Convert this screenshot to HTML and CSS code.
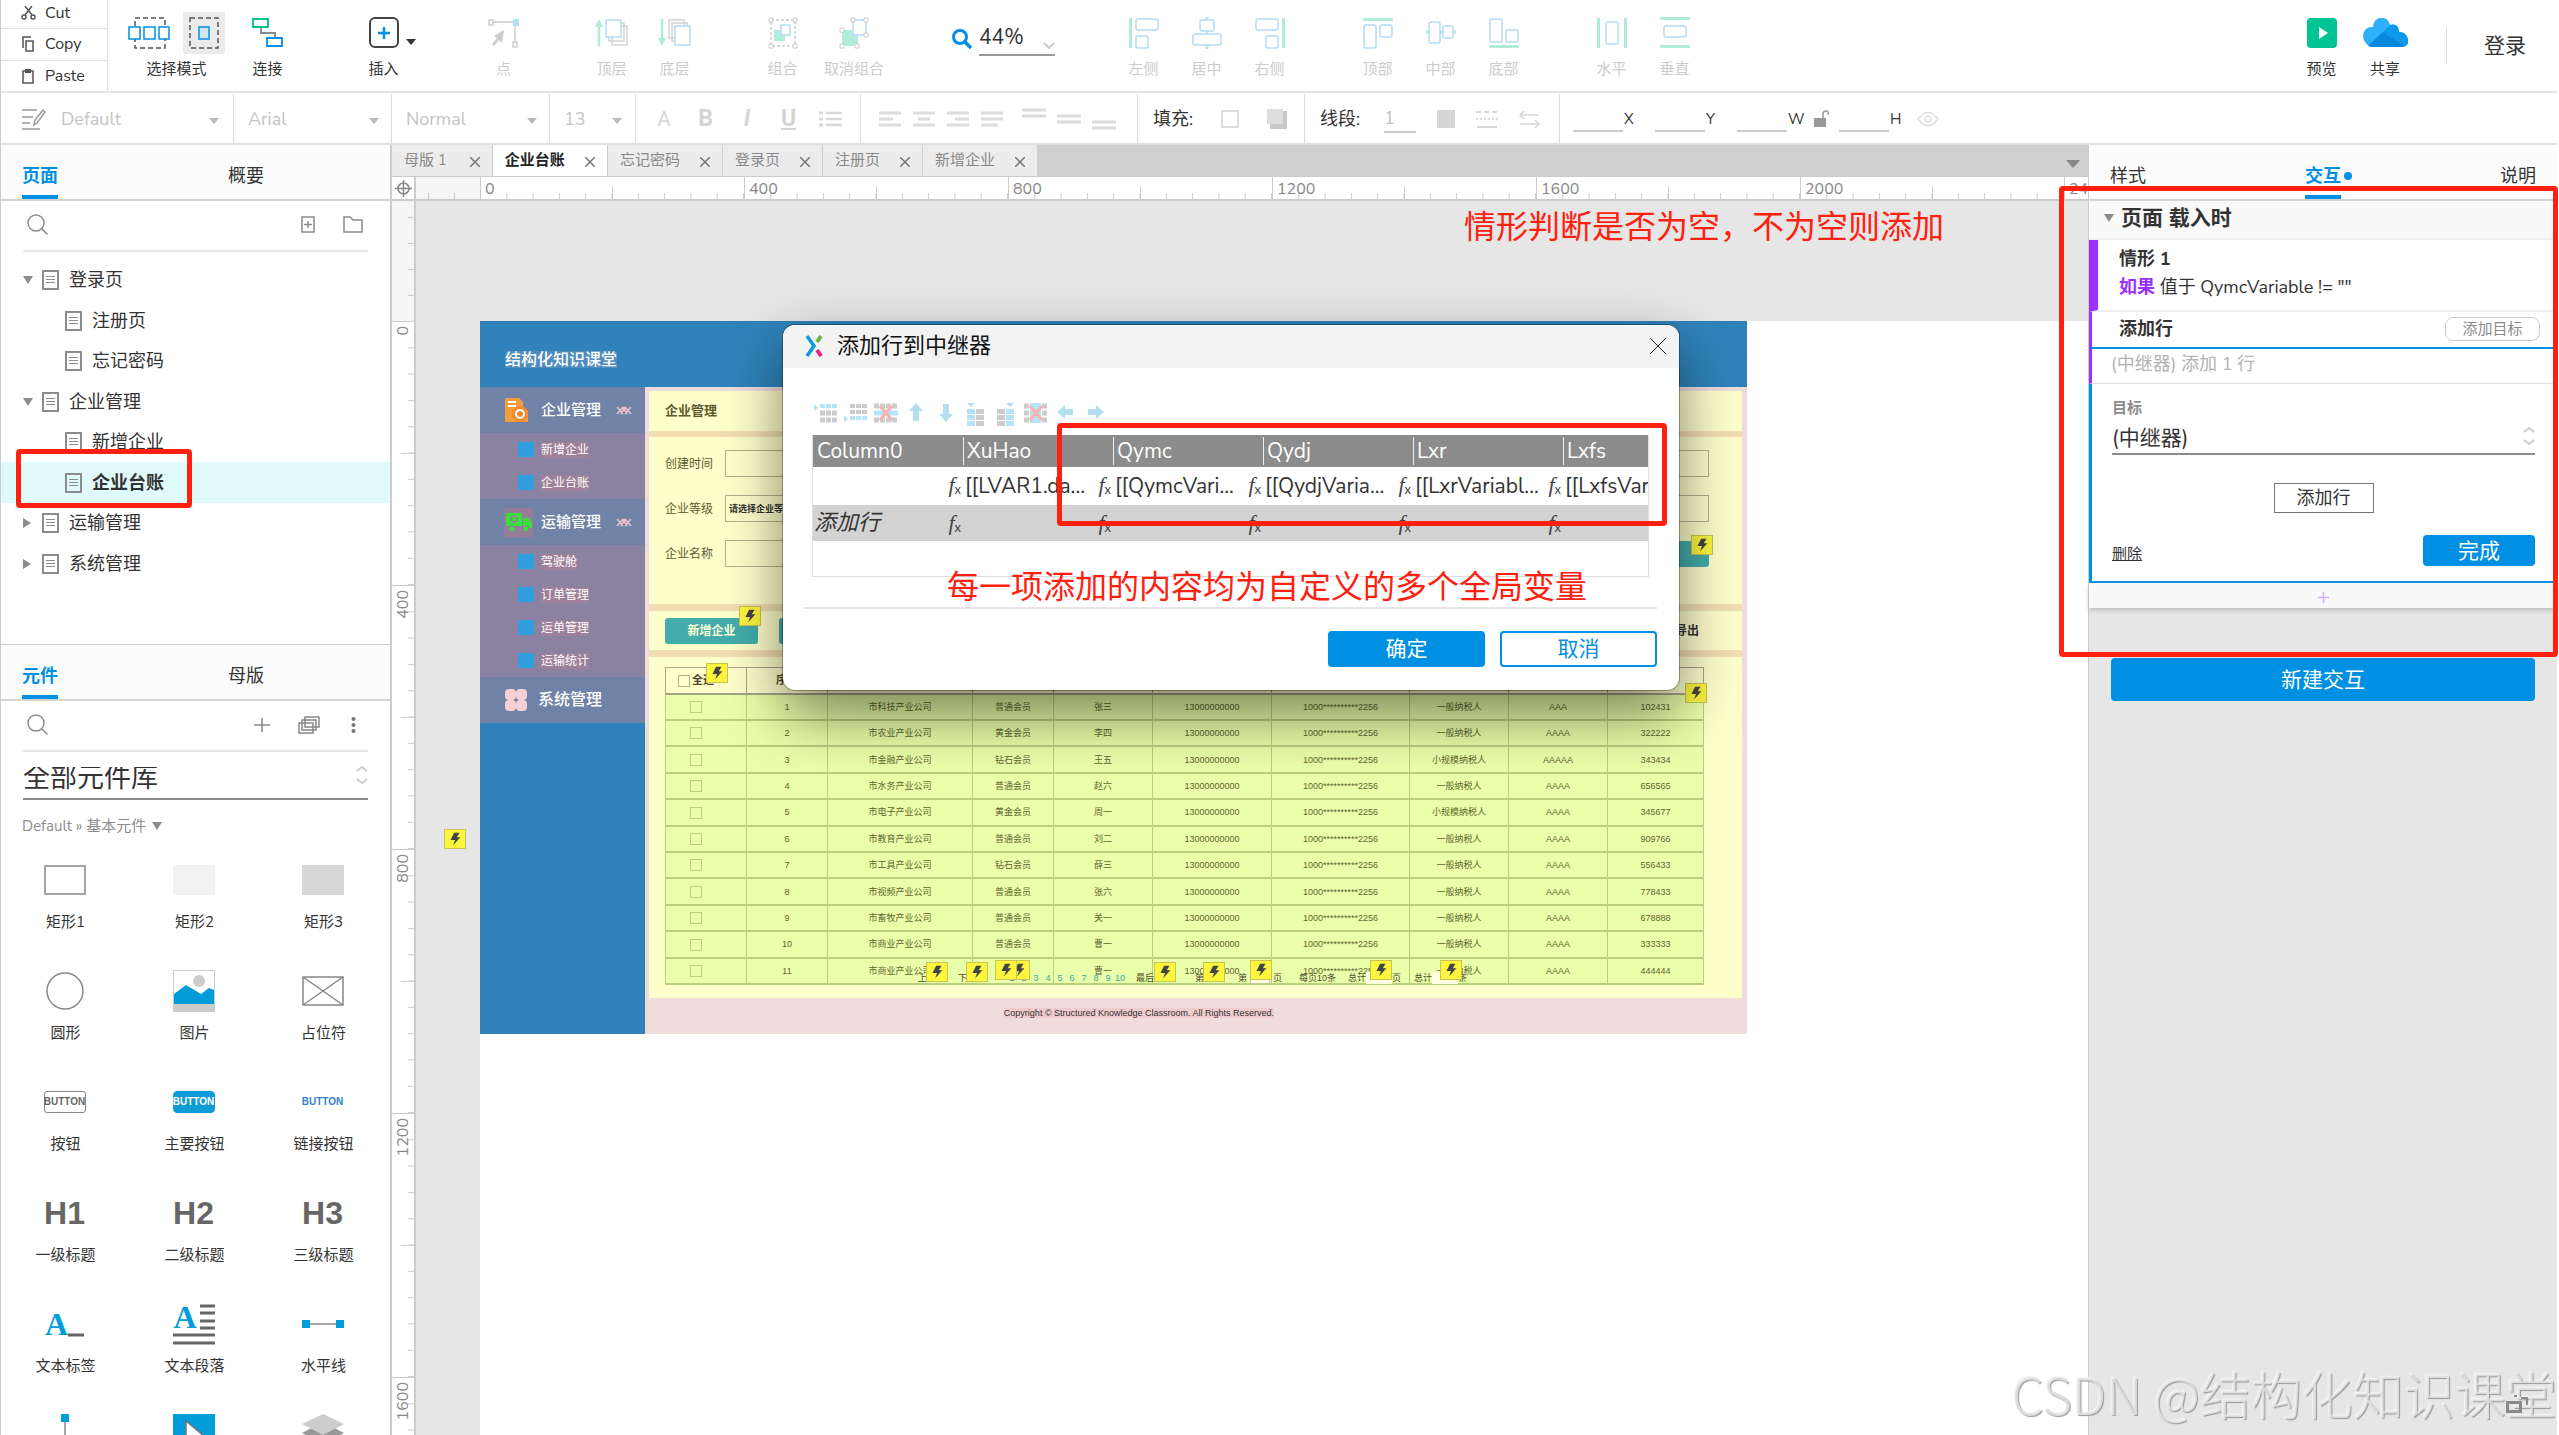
FILE: index.html
```
<!DOCTYPE html>
<html lang="zh-CN">
<head>
<meta charset="utf-8">
<title>企业台账</title>
<link rel="stylesheet" href="styles.css">
</head>
<body>
<svg width="0" height="0" class="defs" aria-hidden="true">
  <symbol id="bolt" viewBox="0 0 22 20"><path d="M10 3h6l-3 5h4l-8 9 2-6H6z" fill="#444"/></symbol>
  <symbol id="doc" viewBox="0 0 17 20"><path d="M1 1h15v18H1z" fill="none" stroke="#8c8c8c" stroke-width="2"/><path d="M4 6.500h9M4 9.500h9M4 12.500h9" stroke="#8c8c8c"/></symbol>
  <symbol id="search" viewBox="0 0 22 22"><circle cx="9" cy="9" r="8" fill="none" stroke="#8c8c8c" stroke-width="1.500"/><path d="M14.500 14.500l6 6" stroke="#8c8c8c" stroke-width="1.500"/></symbol>
  <symbol id="close" viewBox="0 0 10 10"><path d="M0 0l10 10M10 0L0 10" stroke="#777" stroke-width="1.500"/></symbol>
  <symbol id="updown" viewBox="0 0 12 20"><path d="M1 6l5-4 5 4M1 14l5 4 5-4" fill="none" stroke="#ccc" stroke-width="2"/></symbol>
  <symbol id="fold" viewBox="0 0 16 9"><path d="M1 1l6 7M7 1L1 8M9 1l6 7M15 1L9 8M7 1l4 7M9 1L5 8" stroke="#eec4c8" stroke-width="1.500"/></symbol>
</svg>

<header class="toolbar">
  <div class="clipboard">
    <button><svg width="15" height="14" viewBox="0 0 15 14"><g fill="none" stroke="#555" stroke-width="1.500"><circle cx="3" cy="11" r="2"/><circle cx="12" cy="11" r="2"/><path d="M4 9l7-9M11 9L4 0"/></g></svg>Cut</button>
    <button><svg width="15" height="16" viewBox="0 0 15 16"><path d="M5 5h7v10H5zM2 12V1h8" fill="none" stroke="#555" stroke-width="1.500"/></svg>Copy</button>
    <button><svg width="15" height="16" viewBox="0 0 15 16"><path d="M2 3h10v12H2z" fill="none" stroke="#555" stroke-width="1.500"/><path d="M4 1h6v4H4z" fill="#555"/></svg>Paste</button>
  </div>
  <div class="tools">
    <button class="tool mode">
      <span class="pair">
        <svg width="42" height="32" viewBox="0 0 42 32"><path d="M7 1h30v30H7z" fill="none" stroke="#555" stroke-width="1.500" stroke-dasharray="5 3"/><g fill="#fff" stroke="#0090e3" stroke-width="1.500"><path d="M1 10h11v12H1zM16 10h11v12H16zM31 10h10v12H31z"/></g></svg>
        <span class="picked"><svg width="30" height="32" viewBox="0 0 30 32"><path d="M1 1h28v30H1z" fill="none" stroke="#555" stroke-width="1.500" stroke-dasharray="5 3"/><path d="M10 10h10v12H10z" fill="#d3e6f6" stroke="#0090e3" stroke-width="1.500"/></svg></span>
      </span>选择模式</button>
    <button class="tool"><span class="pair"><svg width="32" height="32" viewBox="0 0 32 32"><g fill="none" stroke-width="1.800"><path d="M9 10v6h14v5" stroke="#888"/><path d="M1 2h15v8H1z" stroke="#00c08b"/><path d="M15 21h15v8H15z" stroke="#0090e3"/></g></svg></span>连接</button>
  </div>
  <div class="tools insert">
    <button class="tool"><span class="pair"><svg width="30" height="32" viewBox="0 0 30 32"><rect x="1" y="1" width="28" height="29" rx="5" fill="none" stroke="#444" stroke-width="2"/><path d="M9 16h12M15 10v12" stroke="#0090e3" stroke-width="2.500"/></svg></span>插入</button>
    <i class="caret dark"></i>
  </div>
  <div class="tools point"><button class="tool off"><span class="pair"><svg width="32" height="32" viewBox="0 0 32 32"><g fill="none" stroke="#ccc" stroke-width="1.500"><path d="M1 3h4v5H1zM5 5h20M27 8v17M25 25h4v5h-4z"/></g><path d="M25 2h6v7h-6z" fill="#b3dcf5"/><path d="M16 13l-2 13-3-3-5 6-2-2 5-6-3-2z" fill="#ccc"/></svg></span>点</button></div>
  <div class="tools">
    <button class="tool off"><span class="pair"><svg width="34" height="30" viewBox="0 0 34 30"><path d="M4 28V6" stroke="#b1ecda" stroke-width="2.500"/><path d="M0 9l4-8 4 8z" fill="#b1ecda"/><g fill="#fff" stroke="#d4d4d4" stroke-width="1.500"><path d="M17 8h15v19H17zM14 5h15v18H14z"/><path d="M11 2h15v17H11z" stroke="#b3dcf5"/></g></svg></span>顶层</button>
    <button class="tool off"><span class="pair"><svg width="34" height="30" viewBox="0 0 34 30"><path d="M4 1v22" stroke="#b1ecda" stroke-width="2.500"/><path d="M0 20l4 8 4-8z" fill="#b1ecda"/><g fill="#fff" stroke="#d4d4d4" stroke-width="1.500"><path d="M11 2h15v18H11zM14 5h15v18H14z"/><path d="M17 8h15v19H17z" stroke="#b3dcf5"/></g></svg></span>底层</button>
  </div>
  <div class="tools">
    <button class="tool off"><span class="pair"><svg width="30" height="32" viewBox="0 0 30 32"><path d="M3 3h24v26H3z" fill="none" stroke="#ccc" stroke-width="1.500" stroke-dasharray="3 2"/><g fill="#fff" stroke="#ccc"><path d="M1 1h4v4H1zM25 1h4v4h-4zM1 27h4v4H1zM25 27h4v4h-4z"/></g><path d="M6 13h11v11H6z" fill="#b1ecda"/><path d="M13 8h9v10h-9z" fill="#fff" stroke="#b3dcf5" stroke-width="1.500"/></svg></span>组合</button>
    <button class="tool off wide"><span class="pair"><svg width="30" height="32" viewBox="0 0 30 32"><path d="M3 13h16v16H3z" fill="#b1ecda"/><path d="M14 3h13v15H14z" fill="#fff" stroke="#b3dcf5" stroke-width="1.500"/><g fill="#fff" stroke="#ccc"><path d="M1 11h4v4H1zM1 27h4v4H1zM16 27h4v4h-4zM12 1h4v4h-4zM25 1h4v4h-4zM25 16h4v4h-4z"/></g></svg></span>取消组合</button>
  </div>
  <label class="zoom">
    <svg width="20" height="20" viewBox="0 0 20 20"><circle cx="8" cy="8" r="6.500" fill="none" stroke="#0090e3" stroke-width="3"/><path d="M13 13l6 6" stroke="#0090e3" stroke-width="3.500"/></svg>
    <input value="44%" aria-label="缩放">
    <svg class="zoom-arrow" width="12" height="7" viewBox="0 0 12 7"><path d="M1 1l5 5 5-5" fill="none" stroke="#ccc" stroke-width="2"/></svg>
  </label>
  <div class="tools">
    <button class="tool off"><span class="pair"><svg width="30" height="32" viewBox="0 0 30 32" fill="none" stroke-width="1.500" stroke="#b3dcf5"><path d="M1.500 1v30" stroke="#b1ecda" stroke-width="3"/><rect x="7" y="2" width="22" height="11" rx="2"/><rect x="7" y="19" width="12" height="12" rx="2"/></svg></span>左侧</button>
    <button class="tool off"><span class="pair"><svg width="30" height="32" viewBox="0 0 30 32" fill="#fff" stroke-width="1.500" stroke="#b3dcf5"><path d="M15 0v32" stroke="#b1ecda" stroke-width="3"/><rect x="8" y="3" width="14" height="11" rx="2"/><rect x="1" y="17" width="28" height="11" rx="2"/></svg></span>居中</button>
    <button class="tool off"><span class="pair"><svg width="30" height="32" viewBox="0 0 30 32" fill="none" stroke-width="1.500" stroke="#b3dcf5"><path d="M28.500 1v30" stroke="#b1ecda" stroke-width="3"/><rect x="1" y="2" width="22" height="11" rx="2"/><rect x="11" y="19" width="12" height="12" rx="2"/></svg></span>右侧</button>
  </div>
  <div class="tools">
    <button class="tool off"><span class="pair"><svg width="30" height="32" viewBox="0 0 30 32" fill="none" stroke-width="1.500" stroke="#b3dcf5"><path d="M0 2.500h30" stroke="#b1ecda" stroke-width="3"/><rect x="1" y="8" width="12" height="23" rx="2"/><rect x="17" y="8" width="12" height="12" rx="2"/></svg></span>顶部</button>
    <button class="tool off"><span class="pair"><svg width="30" height="32" viewBox="0 0 30 32" fill="#fff" stroke-width="1.500" stroke="#b3dcf5"><path d="M0 15h30" stroke="#b1ecda" stroke-width="3"/><rect x="3" y="5" width="11" height="21" rx="2"/><rect x="17" y="9" width="10" height="12" rx="2"/></svg></span>中部</button>
    <button class="tool off"><span class="pair"><svg width="30" height="32" viewBox="0 0 30 32" fill="none" stroke-width="1.500" stroke="#b3dcf5"><path d="M0 29.500h30" stroke="#b1ecda" stroke-width="3"/><rect x="1" y="2" width="12" height="23" rx="2"/><rect x="17" y="13" width="12" height="12" rx="2"/></svg></span>底部</button>
  </div>
  <div class="tools">
    <button class="tool off"><span class="pair"><svg width="30" height="32" viewBox="0 0 30 32" fill="none" stroke-width="1.500" stroke="#b3dcf5"><path d="M1.500 1v30M28.500 1v30" stroke="#b1ecda" stroke-width="3"/><rect x="9" y="5" width="12" height="22" rx="2"/></svg></span>水平</button>
    <button class="tool off"><span class="pair"><svg width="30" height="32" viewBox="0 0 30 32" fill="none" stroke-width="1.500" stroke="#b3dcf5"><path d="M0 1.500h30M0 29.500h30" stroke="#b1ecda" stroke-width="3"/><rect x="4" y="9" width="22" height="11" rx="2"/></svg></span>垂直</button>
  </div>
  <div class="account">
    <button class="tool"><span class="pair"><svg width="30" height="30" viewBox="0 0 30 30"><rect width="30" height="30" rx="4" fill="#00c494"/><path d="M12 9l9 6-9 6z" fill="#fff"/></svg></span>预览</button>
    <button class="tool"><span class="pair"><svg width="46" height="30" viewBox="0 0 46 30"><path d="M10 29C-2 26-2 8 11 9 12-3 26-3 28 7c6-2 9 2 9 7 11 0 11 14 4 15z" fill="#2fb0fb"/><path d="M21 14l7-7c6-2 9 2 9 7 11 0 11 14 6 14z" fill="#0d9aec"/><path d="M6 28l15-14 22 14-3 1H10z" fill="#0489dc"/></svg></span>共享</button>
    <a class="login" href="#login">登录</a>
  </div>
</header>

<section class="format">
  <div class="cell style-cell">
    <svg width="24" height="22" viewBox="0 0 24 22"><path d="M0 2h15M0 9h11M0 15h8M0 21h18" stroke="#999" stroke-width="1.500"/><path d="M12 17l1-5 8-10 2 2-8 11z" fill="#fff" stroke="#999" stroke-width="1.500"/></svg>
    <select aria-label="样式"><option>Default</option></select><i class="caret"></i>
  </div>
  <div class="cell font-cell"><select aria-label="字体"><option>Arial</option></select><i class="caret"></i></div>
  <div class="cell font-cell"><select aria-label="字重"><option>Normal</option></select><i class="caret"></i></div>
  <div class="cell size-cell"><select aria-label="字号"><option>13</option></select><i class="caret"></i></div>
  <div class="cell letters">
    <button class="thin">A</button><button><b>B</b></button><button><b><i>I</i></b></button><button><u><b>U</b></u></button>
    <button><svg width="24" height="20" viewBox="0 0 24 20"><path d="M8 4h16M8 10h16M8 16h16" stroke="#d8d8d8" stroke-width="2.500"/><path d="M1 4h4M1 10h4M1 16h4" stroke="#d8d8d8" stroke-width="3"/></svg></button>
  </div>
  <div class="cell aligns">
    <svg width="22" height="18" viewBox="0 0 22 18"><path d="M0 3h22M0 9h14M0 15h22"/></svg>
    <svg width="22" height="18" viewBox="0 0 22 18"><path d="M0 3h22M5 9h12M0 15h22"/></svg>
    <svg width="22" height="18" viewBox="0 0 22 18"><path d="M0 3h22M8 9h14M0 15h22"/></svg>
    <svg width="22" height="18" viewBox="0 0 22 18"><path d="M0 3h22M0 9h22M0 15h17"/></svg>
    <div class="vertical">
      <svg width="24" height="24" viewBox="0 0 24 24"><path d="M0 3h24M0 9h24"/></svg>
      <svg width="24" height="24" viewBox="0 0 24 24"><path d="M0 9h24M0 15h24"/></svg>
      <svg width="24" height="24" viewBox="0 0 24 24"><path d="M0 15h24M0 21h24"/></svg>
    </div>
  </div>
  <div class="cell fill-cell">填充:
    <svg width="18" height="18" viewBox="0 0 18 18"><path d="M1 1h16v16H1z" fill="#fff" stroke="#ddd" stroke-width="2"/></svg>
    <svg width="20" height="20" viewBox="0 0 20 20"><path d="M3 2h17v18H3z" fill="#c8c8c8"/><path d="M0 0h16v15H0z" fill="#dedede"/></svg>
  </div>
  <div class="cell line-cell">线段:
    <input value="1" aria-label="线宽">
    <svg width="18" height="18" viewBox="0 0 18 18"><path d="M0 0h18v18H0z" fill="#d6d6d6"/></svg>
    <svg width="22" height="18" viewBox="0 0 22 18"><path d="M0 2h22" stroke="#d8d8d8" stroke-width="2" stroke-dasharray="5 3"/><path d="M0 9h22" stroke="#d8d8d8" stroke-width="2" stroke-dasharray="2 2"/><path d="M1 17h20" stroke="#d8d8d8" stroke-width="2"/></svg>
    <svg width="21" height="18" viewBox="0 0 21 18"><path d="M20 5H1l4-4M1 5l4 4M1 14h19l-4-4M20 14l-4 4" fill="none" stroke="#d8d8d8" stroke-width="1.500"/></svg>
  </div>
  <div class="geometry">
    <label><input>X</label><label><input>Y</label>
    <label class="w"><input>W<svg width="15" height="18" viewBox="0 0 15 18"><path d="M0 8h12v9H0z" fill="#999"/><path d="M9 8V4q0-3 3-3t2 4" fill="none" stroke="#999" stroke-width="1.500"/></svg></label>
    <label class="h"><input>H</label>
    <svg width="22" height="14" viewBox="0 0 22 14"><path d="M1 7q10-13 20 0Q11 20 1 7z" fill="none" stroke="#ddd" stroke-width="1.500"/><circle cx="11" cy="7" r="3" fill="none" stroke="#ddd" stroke-width="1.500"/></svg>
  </div>
</section>

<main>
  <aside class="left">
    <section class="pages">
      <nav class="tabs"><button class="on">页面</button><button>概要</button></nav>
      <div class="searchbar">
        <svg width="22" height="22"><use href="#search"/></svg>
        <span class="spacer"></span>
        <svg width="14" height="17" viewBox="0 0 14 17"><path d="M1 1h12v15H1zM7 5v7M3 8.500h8" fill="none" stroke="#8c8c8c" stroke-width="1.500"/></svg>
        <svg width="20" height="17" viewBox="0 0 20 17"><path d="M1 1h6l3 3h9v12H1z" fill="none" stroke="#8c8c8c" stroke-width="1.500"/></svg>
      </div>
      <ul class="tree">
        <li><i class="caret gray"></i><svg width="17" height="20"><use href="#doc"/></svg>登录页</li>
        <li class="child"><svg width="17" height="20"><use href="#doc"/></svg>注册页</li>
        <li class="child"><svg width="17" height="20"><use href="#doc"/></svg>忘记密码</li>
        <li><i class="caret gray"></i><svg width="17" height="20"><use href="#doc"/></svg>企业管理</li>
        <li class="child"><svg width="17" height="20"><use href="#doc"/></svg>新增企业</li>
        <li class="child current"><svg width="17" height="20"><use href="#doc"/></svg>企业台账<span class="mark"></span></li>
        <li><i class="caret gray closed"></i><svg width="17" height="20"><use href="#doc"/></svg>运输管理</li>
        <li><i class="caret gray closed"></i><svg width="17" height="20"><use href="#doc"/></svg>系统管理</li>
      </ul>
    </section>
    <section class="widgets">
      <nav class="tabs"><button class="on">元件</button><button>母版</button></nav>
      <div class="searchbar">
        <svg width="22" height="22"><use href="#search"/></svg>
        <span class="spacer"></span>
        <svg width="16" height="16" viewBox="0 0 16 16"><path d="M0 8h16M8 1v14" stroke="#888" stroke-width="1.500"/></svg>
        <svg width="22" height="18" viewBox="0 0 22 18"><g fill="#fff" stroke="#888" stroke-width="1.500"><path d="M7 1h14v10H7zM4 4h14v10H4zM1 7h14v10H1z"/></g></svg>
        <svg class="dots" width="5" height="18" viewBox="0 0 5 18"><g fill="#777"><circle cx="2.500" cy="3" r="2"/><circle cx="2.500" cy="9" r="2"/><circle cx="2.500" cy="15" r="2"/></g></svg>
      </div>
      <div class="picker"><select aria-label="元件库"><option>全部元件库</option></select><svg width="12" height="20"><use href="#updown"/></svg></div>
      <div class="crumb">Default » 基本元件 <i class="caret gray"></i></div>
      <ul class="grid">
        <li><span><svg width="42" height="30"><path d="M1 1h40v28H1z" fill="#fff" stroke="#888" stroke-width="1.500"/></svg></span>矩形1</li>
        <li><span><svg width="42" height="30"><path d="M0 0h42v30H0z" fill="#f2f2f2"/></svg></span>矩形2</li>
        <li><span><svg width="42" height="30"><path d="M0 0h42v30H0z" fill="#d7d7d7"/></svg></span>矩形3</li>
        <li><span><svg width="40" height="40"><circle cx="20" cy="20" r="18" fill="none" stroke="#888" stroke-width="1.500"/></svg></span>圆形</li>
        <li><span><svg width="42" height="42"><path d="M0 0h42v42H0z" fill="#ccc"/><path d="M1 1h40v33H1z" fill="#fff"/><circle cx="26" cy="11" r="6" fill="#ccc"/><path d="M1 24l12-9 15 9 8-6 5 2v14H1z" fill="#009dd9"/></svg></span>图片</li>
        <li><span><svg width="42" height="30"><path d="M1 1h40v28H1zM1 1l40 28M41 1L1 29" fill="none" stroke="#888" stroke-width="1.500"/></svg></span>占位符</li>
        <li><span><b class="chip">BUTTON</b></span>按钮</li>
        <li><span><b class="chip primary">BUTTON</b></span>主要按钮</li>
        <li><span><b class="chip link">BUTTON</b></span>链接按钮</li>
        <li><span><b class="heading">H1</b></span>一级标题</li>
        <li><span><b class="heading">H2</b></span>二级标题</li>
        <li><span><b class="heading">H3</b></span>三级标题</li>
        <li><span><b class="glyph">A</b><svg width="16" height="30"><path d="M0 26h16" stroke="#666" stroke-width="3"/></svg></span>文本标签</li>
        <li><span class="para"><b class="glyph">A</b><svg width="42" height="42"><path d="M27 3h15M27 10h15M27 18h15M27 25h15M0 32h42M0 40h42" stroke="#666" stroke-width="3"/></svg></span>文本段落</li>
        <li><span><svg width="42" height="10"><path d="M0 5h42" stroke="#888" stroke-width="1.500"/><path d="M0 1h8v8H0zM34 1h8v8h-8z" fill="#009dd9"/></svg></span>水平线</li>
        <li class="cut"><span><svg width="10" height="42"><path d="M5 0v42" stroke="#888" stroke-width="1.500"/><path d="M1 0h8v8H1z" fill="#009dd9"/></svg></span></li>
        <li class="cut"><span><svg width="42" height="42"><path d="M0 0h42v42H0z" fill="#009dd9"/><path d="M13 7l18 15H13z" fill="#fff" stroke="#777" stroke-width="1.500"/></svg></span></li>
        <li class="cut"><span><svg width="42" height="42"><path d="M21 8l21 11-21 11L0 19z" fill="#999"/><path d="M21 0l21 10-21 11L0 10z" fill="#ccc"/></svg></span></li>
      </ul>
    </section>
  </aside>

  <section class="workspace">
    <nav class="files">
      <button>母版 1<svg width="10" height="10"><use href="#close"/></svg></button>
      <button class="on">企业台账<svg width="10" height="10"><use href="#close"/></svg></button>
      <button>忘记密码<svg width="10" height="10"><use href="#close"/></svg></button>
      <button>登录页<svg width="10" height="10"><use href="#close"/></svg></button>
      <button>注册页<svg width="10" height="10"><use href="#close"/></svg></button>
      <button>新增企业<svg width="10" height="10"><use href="#close"/></svg></button>
      <span class="spacer"></span><i class="caret more"></i>
    </nav>
    <div class="ruler-x">
      <span class="origin"><svg width="17" height="17" viewBox="0 0 17 17"><circle cx="8.500" cy="8.500" r="5.500" fill="none" stroke="#888" stroke-width="1.500"/><path d="M8.500 0v17M0 8.500h17" stroke="#888" stroke-width="1.500"/></svg></span>
      <span class="before"></span>
      <span class="unit">0</span><span class="unit">400</span><span class="unit">800</span><span class="unit">1200</span><span class="unit">1600</span><span class="unit">2000</span><span class="unit">2400</span>
    </div>
    <div class="stage-row">
      <div class="ruler-y">
        <span class="before"></span>
        <span class="unit"><b>0</b></span><span class="unit"><b>400</b></span><span class="unit"><b>800</b></span><span class="unit"><b>1200</b></span><span class="unit"><b>1600</b></span>
      </div>
      <div class="stage">
        <svg class="badge b-page"><use href="#bolt"/></svg>
        <div class="sheet">
          <article class="board">
            <header class="board-head"><span>结构化知识课堂</span></header>
            <nav class="menu">
              <h3><svg width="25" height="24" viewBox="0 0 25 24"><path d="M1 2q0-2 2-2h12l4 4v8h5v12H1z" fill="#f79b3f"/><path d="M4 4h8M4 8h8" stroke="#fff" stroke-width="2"/><circle cx="16" cy="16" r="8" fill="#f58a2c"/><circle cx="16" cy="16" r="4" fill="none" stroke="#fff" stroke-width="2"/></svg>企业管理<svg class="fold" width="16" height="9"><use href="#fold"/></svg></h3>
              <ul><li><span>新增企业</span></li><li><span>企业台账</span></li></ul>
              <h3><svg width="29" height="29" viewBox="0 0 29 29" class="truck"><path d="M2 5h16v13H2zM19 10h6l3 5v5H19z" fill="#38e03c"/><circle cx="10" cy="11" r="3" fill="none" stroke="#977c9a" stroke-width="1.500"/><g fill="#38e03c" stroke="#977c9a"><circle cx="8" cy="21" r="3"/><circle cx="22" cy="21" r="3"/></g></svg>运输管理<svg class="fold" width="16" height="9"><use href="#fold"/></svg></h3>
              <ul><li><span>驾驶舱</span></li><li><span>订单管理</span></li><li><span>运单管理</span></li><li><span>运输统计</span></li></ul>
              <h3 class="large"><svg width="24" height="24" viewBox="0 0 24 24"><g fill="#f7d0d3"><rect x="1" y="1" width="11" height="11" rx="4"/><rect x="12" y="1" width="11" height="11" rx="4"/><rect x="1" y="12" width="11" height="11" rx="4"/><rect x="12" y="12" width="11" height="11" rx="4"/></g></svg>系统管理</h3>
            </nav>
            <div class="content">
              <h2>企业管理</h2>
              <form class="filters">
                <div class="field"><label for="f1">创建时间</label><input id="f1"><input aria-label="条件二"></div>
                <div class="field"><label for="f2">企业等级</label><select id="f2"><option>请选择企业等级</option></select><input aria-label="条件三"></div>
                <div class="field"><label for="f3">企业名称</label><input id="f3"><button type="button" class="teal" aria-label="查询"></button></div>
              </form>
              <div class="actions"><button class="teal">新增企业</button><button class="teal" aria-label="操作"></button><a href="#export">导出</a></div>
              <div class="records">
                <table>
                  <colgroup><col class="c1"><col class="c1"><col class="c3"><col class="c1"><col class="c2"><col class="c5"><col class="c6"><col class="c2"><col class="c2"><col></colgroup>
                  <thead><tr><th><label><input type="checkbox">全选</label></th><th>序号</th><th></th><th></th><th></th><th></th><th></th><th></th><th></th><th></th></tr></thead>
                  <tbody>
                  <tr><td><input type="checkbox" aria-label="选择"></td><td>1</td><td>市科技产业公司</td><td>普通会员</td><td>张三</td><td>13000000000</td><td>1000**********2256</td><td>一般纳税人</td><td>AAA</td><td>102431</td></tr>
                  <tr><td><input type="checkbox" aria-label="选择"></td><td>2</td><td>市农业产业公司</td><td>黄金会员</td><td>李四</td><td>13000000000</td><td>1000**********2256</td><td>一般纳税人</td><td>AAAA</td><td>322222</td></tr>
                  <tr><td><input type="checkbox" aria-label="选择"></td><td>3</td><td>市金融产业公司</td><td>钻石会员</td><td>王五</td><td>13000000000</td><td>1000**********2256</td><td>小规模纳税人</td><td>AAAAA</td><td>343434</td></tr>
                  <tr><td><input type="checkbox" aria-label="选择"></td><td>4</td><td>市水务产业公司</td><td>普通会员</td><td>赵六</td><td>13000000000</td><td>1000**********2256</td><td>一般纳税人</td><td>AAAA</td><td>656565</td></tr>
                  <tr><td><input type="checkbox" aria-label="选择"></td><td>5</td><td>市电子产业公司</td><td>黄金会员</td><td>周一</td><td>13000000000</td><td>1000**********2256</td><td>小规模纳税人</td><td>AAAA</td><td>345677</td></tr>
                  <tr><td><input type="checkbox" aria-label="选择"></td><td>6</td><td>市教育产业公司</td><td>普通会员</td><td>刘二</td><td>13000000000</td><td>1000**********2256</td><td>一般纳税人</td><td>AAAA</td><td>909766</td></tr>
                  <tr><td><input type="checkbox" aria-label="选择"></td><td>7</td><td>市工具产业公司</td><td>钻石会员</td><td>薛三</td><td>13000000000</td><td>1000**********2256</td><td>一般纳税人</td><td>AAAA</td><td>556433</td></tr>
                  <tr><td><input type="checkbox" aria-label="选择"></td><td>8</td><td>市视频产业公司</td><td>普通会员</td><td>张六</td><td>13000000000</td><td>1000**********2256</td><td>一般纳税人</td><td>AAAA</td><td>778433</td></tr>
                  <tr><td><input type="checkbox" aria-label="选择"></td><td>9</td><td>市畜牧产业公司</td><td>普通会员</td><td>关一</td><td>13000000000</td><td>1000**********2256</td><td>一般纳税人</td><td>AAAA</td><td>678888</td></tr>
                  <tr><td><input type="checkbox" aria-label="选择"></td><td>10</td><td>市商业产业公司</td><td>普通会员</td><td>曹一</td><td>13000000000</td><td>1000**********2256</td><td>一般纳税人</td><td>AAAA</td><td>333333</td></tr>
                  <tr><td><input type="checkbox" aria-label="选择"></td><td>11</td><td>市商业产业公司</td><td>普通会员</td><td>曹一</td><td>13000000000</td><td>1000**********2256</td><td>一般纳税人</td><td>AAAA</td><td>444444</td></tr>
                  </tbody>
                </table>
                <div class="pager">
                  <span class="p-word">上一页</span><span class="p-next">下一页</span>
                  <span class="nums"><a href="#1">1</a><a href="#2">2</a><a href="#3">3</a><a href="#4">4</a><a href="#5">5</a><a href="#6">6</a><a href="#7">7</a><a href="#8">8</a><a href="#9">9</a><a href="#10">10</a></span>
                  <span class="p-last">最后一页</span><span class="p-first">第一页</span><span class="p-go">第<input aria-label="页码">页</span><span class="p-size">每页10条</span><span class="p-total">总计<i></i>页</span><span>总计<i></i>条</span>
                </div>
              </div>
            </div>
            <footer><span>Copyright © Structured Knowledge Classroom. All Rights Reserved.</span></footer>
            <svg class="badge b1"><use href="#bolt"/></svg><svg class="badge b2"><use href="#bolt"/></svg>
            <svg class="badge b3"><use href="#bolt"/></svg><svg class="badge b4"><use href="#bolt"/></svg>
            <svg class="badge b6"><use href="#bolt"/></svg><svg class="badge b5"><use href="#bolt"/></svg>
            <svg class="badge b7"><use href="#bolt"/></svg><svg class="badge b8"><use href="#bolt"/></svg>
            <svg class="badge b9"><use href="#bolt"/></svg><svg class="badge b10"><use href="#bolt"/></svg>
            <svg class="badge b11"><use href="#bolt"/></svg><svg class="badge b12"><use href="#bolt"/></svg>
            <svg class="badge b13"><use href="#bolt"/></svg>
          </article>
        </div>
        <p class="note note-top">情形判断是否为空，不为空则添加</p>
        <div class="dialog" role="dialog" aria-labelledby="dlg">
          <header><svg width="18" height="22" viewBox="0 0 18 22"><path d="M2 1l7 10-7 10" fill="none" stroke="#0a9bdc" stroke-width="3.500"/><path d="M16 1l-4 6" stroke="#6cb644" stroke-width="4"/><path d="M16 21l-4-6" stroke="#e6257f" stroke-width="4"/></svg><h2 id="dlg">添加行到中继器</h2>
            <button aria-label="关闭"><svg width="18" height="18" viewBox="0 0 18 18"><path d="M1 1l16 16M17 1L1 17" stroke="#222"/></svg></button></header>
          <div class="row-tools">
            <svg width="24" height="20" viewBox="0 0 24 20"><path d="M0 1l4 4-4 3z" fill="#b5def0"/><path d="M6 3h18" stroke="#b5e3f7" stroke-width="4" stroke-dasharray="5 1"/><path d="M6 10h18M6 17h18" stroke="#ccc" stroke-width="5" stroke-dasharray="5 1"/></svg>
            <svg width="24" height="20" viewBox="0 0 24 20"><path d="M0 12l4 4-4 3z" fill="#b5def0"/><path d="M6 15h18" stroke="#b5e3f7" stroke-width="4" stroke-dasharray="5 1"/><path d="M6 3h18M6 9h18" stroke="#ccc" stroke-width="4" stroke-dasharray="5 1"/></svg>
            <svg width="24" height="20" viewBox="0 0 24 20"><path d="M0 3h24M0 17h24" stroke="#ccc" stroke-width="5" stroke-dasharray="5 1"/><path d="M0 10h24" stroke="#b5e3f7" stroke-width="5"/><path d="M6 3l12 14M18 3L6 17" stroke="#f3b5b0" stroke-width="3"/></svg>
            <svg width="24" height="20" viewBox="0 0 24 20"><path d="M12 0l7 8h-4v10h-6V8H5z" fill="#b5def0"/></svg>
            <svg width="24" height="20" viewBox="0 0 24 20"><path d="M12 19l7-8h-4V1H9v10H5z" fill="#b5def0"/></svg>
            <svg width="24" height="24" viewBox="0 0 24 24"><path d="M3 0h8L7 4z" fill="#b5def0"/><path d="M7 6v18" stroke="#b5e3f7" stroke-width="8" stroke-dasharray="5 1"/><path d="M16 6v18" stroke="#ccc" stroke-width="8" stroke-dasharray="5 1"/></svg>
            <svg width="24" height="24" viewBox="0 0 24 24"><path d="M12 0h8l-4 4z" fill="#b5def0"/><path d="M16 6v18" stroke="#b5e3f7" stroke-width="8" stroke-dasharray="5 1"/><path d="M7 6v18" stroke="#ccc" stroke-width="8" stroke-dasharray="5 1"/></svg>
            <svg width="24" height="20" viewBox="0 0 24 20"><path d="M0 3h24M0 10h24M0 17h24" stroke="#ccc" stroke-width="5" stroke-dasharray="5 1"/><path d="M12 0v20" stroke="#b5e3f7" stroke-width="10"/><path d="M6 3l12 14M18 3L6 17" stroke="#f3b5b0" stroke-width="3"/></svg>
            <svg width="24" height="20" viewBox="0 0 24 20"><path d="M3 9l8-7v4h8v6h-8v4z" fill="#b5def0"/></svg>
            <svg width="24" height="20" viewBox="0 0 24 20"><path d="M20 9l-8-7v4H4v6h8v4z" fill="#b5def0"/></svg>
          </div>
          <div class="data">
            <table>
              <thead><tr><th>Column0</th><th>XuHao</th><th>Qymc</th><th>Qydj</th><th>Lxr</th><th>Lxfs</th></tr></thead>
              <tbody>
                <tr><td><em class="fx">f<sub>x</sub></em></td><td>[[LVAR1.da...<em class="fx">f<sub>x</sub></em></td><td>[[QymcVari...<em class="fx">f<sub>x</sub></em></td><td>[[QydjVaria...<em class="fx">f<sub>x</sub></em></td><td>[[LxrVariabl...<em class="fx">f<sub>x</sub></em></td><td>[[LxfsVar</td></tr>
                <tr class="add"><td><i>添加行</i><em class="fx">f<sub>x</sub></em></td><td><em class="fx">f<sub>x</sub></em></td><td><em class="fx">f<sub>x</sub></em></td><td><em class="fx">f<sub>x</sub></em></td><td><em class="fx">f<sub>x</sub></em></td><td></td></tr>
              </tbody>
            </table>
          </div>
          <footer><button class="primary">确定</button><button>取消</button></footer>
          <span class="mark dlg-mark"></span>
          <p class="note note-dlg">每一项添加的内容均为自定义的多个全局变量</p>
        </div>
      </div>
    </div>
  </section>

  <aside class="right">
    <nav class="tabs three"><button>样式</button><button class="on">交互</button><button>说明</button></nav>
    <div class="event"><i class="caret gray"></i>页面 载入时</div>
    <div class="case"><strong>情形 1</strong><span><b>如果</b> 值于 QymcVariable != ""</span></div>
    <div class="action"><strong>添加行</strong><button class="pill">添加目标</button></div>
    <div class="summary">(中继器) 添加 1 行</div>
    <div class="editor">
      <label for="target">目标</label>
      <div class="picker"><select id="target"><option>(中继器)</option></select><svg width="12" height="20"><use href="#updown"/></svg></div>
      <button class="outline">添加行</button>
      <div class="done"><a href="#delete">删除</a><button class="primary">完成</button></div>
    </div>
    <button class="plus" aria-label="添加"><svg width="11" height="11" viewBox="0 0 11 11"><path d="M0 5.500h11M5.500 0v11" stroke="#d3aef5" stroke-width="1.500"/></svg></button>
    <button class="primary create">新建交互</button>
    <span class="mark right-mark"></span>
    <div class="watermark">CSDN @结构化知识课堂</div>
    <svg class="corner" width="22" height="19" viewBox="0 0 22 19"><path d="M1.500 8.500h13v9h-13z" fill="none" stroke="#8a8a8a" stroke-width="3"/><path d="M8 2h3M15 4h6v7" fill="none" stroke="#8a8a8a" stroke-width="2"/></svg>
  </aside>
</main>
</body>
</html>
```
FILE: styles.css
```
* { box-sizing: border-box; }
html, body { height: 100%; }
body {
  margin: 0; padding-right: 2px; border-left: 1px solid #ccc;
  display: flex; flex-direction: column; overflow: hidden;
  background: #fff; color: #333;
  font: 18px/24px "Nunito Sans", Lato, "Noto Sans CJK SC", sans-serif;
}
button, input, select { font: inherit; color: inherit; margin: 0; padding: 0; border: 0; background: none; border-radius: 0; }
select { appearance: none; }
svg { display: block; flex: none; }
ul, h2, h3, p { margin: 0; padding: 0; list-style: none; font-weight: normal; }
.defs { position: absolute; }
.spacer { flex: 1; }
.caret { flex: none; width: 0; height: 0; border: 5px solid transparent; border-top: 6px solid #bbb; border-bottom: 0; }
.caret.dark { border-top-color: #333; }
.caret.gray { border-top: 8px solid #8c8c8c; }
.caret.closed { border: 5px solid transparent; border-left: 8px solid #8c8c8c; border-right: 0; }
.mark { position: absolute; border: 5px solid #ff2010; border-radius: 4px; pointer-events: none; z-index: 5; }
.note { position: absolute; color: #ff2010; font-size: 32px; line-height: 40px; white-space: nowrap; }

/* top toolbar */
.toolbar { flex: none; display: flex; height: 93px; border-bottom: 2px solid #e6e6e6; font-size: 15px; line-height: 20px; }
.clipboard { width: 107px; display: flex; flex-direction: column; border-right: 1px solid #ddd; font-size: 16px; }
.clipboard button { flex: 1; display: flex; align-items: center; gap: 9px; padding-left: 20px; border-bottom: 1px solid #ddd; }
.clipboard button:first-child { flex: 0 0 29px; padding-bottom: 3px; }
.clipboard button:last-child { border: 0; }
.tools { display: flex; margin-right: 45px; }
.clipboard + .tools { margin: 0 53px 0 20px; }
.insert { position: relative; margin-right: 57px; }
.insert .caret { position: absolute; left: 54px; top: 39px; }
.tool { width: 63px; display: flex; flex-direction: column; align-items: center; padding-top: 12px; }
.tool.mode { width: 97px; margin-right: 11px; }
.tool.wide { width: 72px; margin-left: 4px; }
.pair { height: 42px; display: flex; align-items: center; gap: 13px; margin-bottom: 5px; }
.picked { width: 42px; height: 42px; display: grid; place-items: center; background: #ebebeb; }
.off { color: #ccc; }
.zoom { display: flex; align-items: center; height: 34px; margin: 22px 57px 0 17px; position: relative; font-size: 21px; }
.zoom input { width: 76px; height: 34px; padding-bottom: 2px; margin-left: 7px; border-bottom: 2px solid #999; }
.zoom-arrow { position: absolute; right: 0; top: 20px; }
.account { margin-left: auto; display: flex; }
.account .tool { width: 63px; }
.account .tool + .tool { width: 64px; margin-right: 29px; }
.login { width: 111px; height: 36px; margin-top: 28px; padding-left: 37px; border-left: 1px solid #ddd; font-size: 21px; line-height: 36px; color: #333; text-decoration: none; }

/* format bar */
.format { flex: none; display: flex; height: 52px; padding-top: 1px; border-bottom: 2px solid #e0e0e0; }
.cell { display: flex; align-items: center; border-right: 1px solid #ddd; }
.cell select { flex: 1; min-width: 0; color: #c4c4c4; opacity: 1; }
.cell .caret { margin-top: 4px; }
.style-cell { width: 233px; padding: 0 14px 0 21px; }
.style-cell svg { margin-right: 15px; }
.font-cell { width: 158px; padding: 0 12px 0 14px; }
.size-cell { width: 86px; padding: 0 13px 0 14px; }
.letters { width: 225px; padding: 0 17px 0 15px; justify-content: space-between; color: #d4d4d4; font: 23px "Roboto", sans-serif; }
.letters button { width: 26px; display: grid; place-items: center; }
.letters .thin { font-size: 20px; }
.aligns { width: 277px; padding-left: 18px; gap: 12px; }
.aligns path { stroke: #dcdcdc; stroke-width: 3; }
.vertical { display: flex; gap: 11px; margin-left: 7px; }
.fill-cell { width: 167px; padding-left: 15px; }
.fill-cell svg { margin-left: 28px; }
.line-cell { width: 255px; padding-left: 15px; }
.line-cell input { width: 32px; height: 28px; margin-left: 24px; border-bottom: 2px solid #ccc; color: #c4c4c4; }
.line-cell svg { margin-left: 21px; }
.geometry { display: flex; align-items: center; padding-left: 13px; font-size: 15px; }
.geometry label { width: 82px; display: flex; align-items: center; gap: 1px; }
.geometry input { width: 50px; height: 26px; border-bottom: 2px solid #ccc; }
.geometry .w { width: 102px; }
.geometry .h { width: 78px; }
.geometry .w svg { margin-left: 8px; }

main { flex: 1; min-height: 0; display: flex; }

/* panel tabs */
.tabs { display: flex; height: 56px; padding: 0 21px; background: #fcfcfc; border-bottom: 2px solid #d4d4d4; }
.tabs button { width: 36px; height: 54px; padding-top: 12px; border-bottom: 4px solid transparent; white-space: nowrap; margin-right: 170px; }
.tabs .on { color: #0090e3; font-weight: bold; border-bottom-color: #0090e3; }

/* left panel */
.left { width: 391px; flex: none; display: flex; flex-direction: column; border-right: 2px solid #ccc; overflow: hidden; }
.pages { height: 499px; flex: none; }
.searchbar { display: flex; align-items: center; height: 51px; margin: 0 22px; padding: 0 5px 2px 4px; border-bottom: 2px solid #e6e6e6; }
.searchbar svg + svg { margin-left: 28px; }
.tree { padding-top: 8px; }
.tree li { position: relative; height: 40px; display: flex; align-items: center; padding-left: 22px; }
.tree li:nth-child(even) { height: 41px; }
.tree li > svg { margin: 0 10px 0 9px; }
.tree .closed { margin-right: 2px; }
.tree .child { padding-left: 55px; }
.tree .current { background: #e0fafa; font-weight: bold; }
.tree .mark { left: 15px; top: -13px; width: 176px; height: 59px; }
.widgets { border-top: 1px solid #ccc; }
.searchbar .dots { margin: 0 7px 0 31px; }
.picker { display: flex; align-items: center; margin: 0 22px; border-bottom: 2px solid #8c8c8c; }
.picker select { flex: 1; min-width: 0; }
.widgets .searchbar { height: 51px; }
.widgets .picker { height: 48px; font-size: 27px; }
.widgets .picker select { height: 46px; padding-top: 8px; }
.crumb { display: flex; align-items: center; gap: 6px; height: 51px; padding-left: 21px; font-size: 15px; color: #8c8c8c; }
.grid { display: grid; grid-template-columns: repeat(3, 129px); grid-auto-rows: 111px; font-size: 15px; line-height: 20px; }
.grid li { display: flex; flex-direction: column; align-items: center; padding-top: 8px; }
.grid span { height: 42px; display: flex; align-items: center; margin: 0 2px 11px 0; }
.chip { width: 42px; height: 22px; border: 1px solid #888; border-radius: 3px; font: bold 10px/20px "Liberation Sans", sans-serif; text-align: center; color: #666; display: flex; justify-content: center; }
.chip.primary { background: #109bd7; border-color: #109bd7; color: #fff; border-radius: 4px; }
.chip.link { border-color: transparent; color: #2f7fc9; }
.heading { font: bold 32px/36px "Liberation Sans", sans-serif; color: #666; }
.glyph { font: bold 32px/36px "Liberation Serif", serif; color: #009dd9; }
.grid .para { position: relative; }
.para .glyph { position: absolute; left: 1px; top: -4px; }

/* workspace */
.workspace { flex: 1; min-width: 0; display: flex; flex-direction: column; }
.files { display: flex; height: 32px; flex: none; background: #cfcfcf; font-size: 15px; color: #888; align-items: stretch; border-bottom: 1px solid #ccc; }
.files button { display: flex; align-items: center; gap: 20px; padding: 0 12px 2px 12px; background: #ececec; border-right: 1px solid #ccc; white-space: nowrap; }
.files button:first-child { gap: 23px; }
.files button svg { margin-top: 5px; }
.files .on { background: #fff; color: #222; font-weight: bold; }
.files .more { margin: 15px 8px 0 0; border-width: 8px 7px 0; border-top-color: #888; }
.ruler-x { display: flex; flex: none; height: 24px; overflow: hidden; border-bottom: 2px solid #ccc; color: #888; font-size: 16px; line-height: 25px; }
.origin { flex: 0 0 24px; display: grid; place-items: center; border-right: 2px solid #ccc; }
.ruler-x .before { flex: 0 0 64px; background: repeating-linear-gradient(to left, transparent 0 25px, #ccc 25px 26px) bottom / 100% 6px no-repeat #f5f5f5; }
.ruler-x .unit { flex: 0 0 264px; padding-left: 4px; border-left: 1px solid #ccc; background: linear-gradient(#ccc, #ccc) 50% 100% / 1px 13px no-repeat, linear-gradient(to left, #ccc 1px, transparent 1px) 0 100% / 10% 6px repeat-x; }
.stage-row { flex: 1; min-height: 0; display: flex; }
.ruler-y { width: 24px; flex: none; overflow: hidden; display: flex; flex-direction: column; border-right: 2px solid #ccc; color: #888; font-size: 16px; }
.ruler-y .before { flex: 0 0 120px; background: repeating-linear-gradient(to top, transparent 0 25px, #ccc 25px 26px) right / 6px 100% no-repeat #f5f5f5; }
.ruler-y .unit { flex: 0 0 264px; padding-top: 4px; border-top: 1px solid #ccc; background: linear-gradient(#ccc, #ccc) 100% 50% / 13px 1px no-repeat, linear-gradient(to top, #ccc 1px, transparent 1px) 100% 0 / 6px 10% repeat-y; }
.ruler-y b { display: block; writing-mode: vertical-rl; transform: rotate(180deg); font-weight: normal; line-height: 22px; }
.stage { flex: 1; position: relative; overflow: hidden; padding: 120px 0 0 64px; background: #e6e6e6; }
.sheet { height: 100%; background: #fff; }
.note-top { left: 1048px; top: 7px; }

/* artboard */
.board { position: relative; width: 1267px; display: grid; grid-template: 66px auto 36px / 165px 1fr; background: #f1dcdc; font-family: "Liberation Sans", "Noto Sans CJK SC", sans-serif; }
.board-head { grid-column: 1 / 3; background: #2f83ba; color: #fff; padding: 28px 25px 0; font-size: 16px; line-height: 22px; }
.board-head span { background: rgba(255, 200, 200, .15); font-weight: 500; }
.menu { grid-row: 2 / 4; background: #2f83ba; color: #fff; }
.menu h3 { position: relative; display: flex; align-items: center; height: 46px; padding-left: 24px; gap: 12px; background: #7082a5; font-size: 15px; font-weight: 500; }
.menu h3.large { font-size: 16px; gap: 10px; }
.menu .truck { background: #977c9a; margin-right: -4px; }
.menu .fold { position: absolute; right: 13px; }
.menu ul { background: #8a82a0; font-size: 12px; line-height: 16px; }
.menu li { display: flex; align-items: center; height: 33px; padding-left: 38px; gap: 7px; }
.menu li::before { content: ""; width: 16px; height: 15px; background: #2f9fe0; }
.menu li span { background: #9e8098; }
.content { margin: 4px 5px 0 4px; background: #ffffcc; color: #5c5a2e; display: flex; flex-direction: column; }
.content h2 { height: 46px; padding-left: 16px; border-bottom: 6px solid #f2deb3; font-size: 13px; line-height: 40px; font-weight: bold; }
.filters { height: 174px; padding: 13px 33px 0 16px; border-bottom: 7px solid #f2deb3; font-size: 12px; line-height: 18px; }
.field { display: flex; height: 27px; align-items: center; margin-bottom: 18px; }
.field label { width: 60px; }
.field input, .field select { width: 240px; height: 27px; border: 1px solid #b3b38f; }
.field select { padding-left: 3px; font-size: 9px; font-weight: bold; color: #333; opacity: 1; }
.field > :last-child { margin-left: auto; }
.teal { width: 93px; height: 26px; background: #43adab; color: #ffffd5; border-radius: 3px; font-weight: bold; }
.actions { display: flex; align-items: center; gap: 21px; height: 46px; padding: 0 43px 0 16px; border-bottom: 7px solid #f2deb3; font-size: 12px; line-height: 18px; font-weight: bold; }
.actions a { margin-left: auto; color: #333; text-decoration: none; }
.records { position: relative; height: 341px; padding: 10px 38px 0 16px; }
.records table { table-layout: fixed; width: 1039px; height: 318px; border-collapse: collapse; font-size: 9px; line-height: 12px; text-align: center; color: #5f662f; }
.records th, .records td { padding: 0; border: 1px solid #b8cf7c; border-bottom-width: 2px; }
.records th { height: 26px; border-color: #a5a58a; font-size: 11px; color: #4b4a2a; background: #ffffcc; }
.records tbody { background: #eaffa9; }
.records input[type="checkbox"] { appearance: none; width: 12px; height: 12px; margin: 0 20px 0 0; border: 1px solid #b9cf7c; vertical-align: middle; }
.records th label { display: block; padding-right: 20px; }
.records th input[type="checkbox"] { margin: 0 2px 0 0; border-color: #b3b38f; }
.c1 { width: 81px; } .c2 { width: 99px; } .c3 { width: 145px; } .c5 { width: 119px; } .c6 { width: 138px; }
.pager { position: absolute; left: 269px; top: 315px; display: flex; font-size: 9px; line-height: 12px; white-space: nowrap; color: #4b4a2a; }
.p-word { width: 40px; }
.p-next { width: 48px; }
.nums { display: flex; width: 130px; }
.nums a { width: 12px; text-align: center; color: #3aa8a8; text-decoration: none; }
.p-last { width: 59px; }
.p-first { width: 43px; }
.p-go { width: 61px; }
.p-size { width: 49px; }
.p-total { width: 66px; }
.pager input, .pager i { display: inline-block; width: 26px; height: 12px; vertical-align: top; background: #ffffe0; }
.pager input { border: 1px solid #c4c49c; width: 20px; margin: 0 3px; }
.board footer { grid-column: 2; padding-top: 9px; text-align: center; font-size: 9px; line-height: 12px; color: #333; }
.board footer span { background: #f0cccc; margin-right: 114px; }
.badge { position: absolute; width: 22px; height: 20px; background: #fdf63c; border: 1px solid #c9c455; }
.b-page { left: 28px; top: 628px; }
.b1 { left: 259px; top: 285px; } .b2 { left: 226px; top: 342px; }
.b3 { left: 446px; top: 641px; } .b4 { left: 486px; top: 641px; }
.b5 { left: 515px; top: 639px; } .b6 { left: 528px; top: 639px; }
.b7 { left: 674px; top: 641px; } .b8 { left: 723px; top: 641px; }
.b9 { left: 770px; top: 639px; } .b10 { left: 890px; top: 639px; }
.b11 { left: 960px; top: 639px; } .b12 { left: 1205px; top: 362px; }
.b13 { left: 1211px; top: 214px; }

/* dialog */
.dialog { position: absolute; left: 367px; top: 124px; width: 896px; height: 365px; background: #fff; border-radius: 12px; box-shadow: 0 0 0 1px rgba(0, 0, 0, .3), 0 24px 60px rgba(0, 0, 0, .5); }
.dialog header { display: flex; align-items: center; height: 43px; padding: 0 12px 2px 22px; background: #f3f3f3; border-radius: 12px 12px 0 0; color: #111; }
.dialog h2 { flex: 1; padding-left: 14px; font-size: 22px; }
.row-tools { display: flex; gap: 6px; height: 67px; padding: 35px 32px 0 31px; }
.data { height: 142px; margin: 0 30px 0 29px; overflow: hidden; border: 1px solid #ddd; border-top: 0; font-size: 21px; }
.data table { table-layout: fixed; width: 900px; border-collapse: collapse; }
.data th, .data td { position: relative; width: 150px; padding: 0 0 0 2px; text-align: left; font-weight: normal; white-space: nowrap; }
.data th { height: 32px; background: linear-gradient(#eee, #eee) 0 60% / 1px 28px no-repeat #8c8c8c; color: #fff; padding-left: 4px; }
.data th:first-child { background: #8c8c8c; }
.data td { height: 38px; }
.data td:first-child { padding-left: 1px; }
.data .add td { height: 36px; background: #d3d3d3; }
.data .add i { font-size: 22px; }
.fx { position: absolute; right: 2px; top: 6px; font: italic 22px/24px "Liberation Serif", serif; color: #444; }
.fx sub { font: 13px/12px Lato, sans-serif; vertical-align: -2px; }
.dialog footer { display: flex; justify-content: flex-end; gap: 15px; margin: 30px 22px 0 21px; padding-top: 22px; border-top: 2px solid #e6e6e6; font-size: 21px; }
.dialog footer button { width: 157px; height: 36px; border: 2px solid #0090e3; border-radius: 4px; color: #0090e3; }
button.primary, .dialog footer .primary { background: #0090e3; color: #fff; border-radius: 4px; }
.dlg-mark { left: 274px; top: 98px; width: 610px; height: 103px; }
.note-dlg { left: 164px; top: 243px; }

/* right panel */
.right { position: relative; width: 469px; flex: none; background: #e6e6e6; border-left: 1px solid #ccc; display: flex; flex-direction: column; }
.three { flex: none; justify-content: space-between; }
.three button { margin: 0; }
.three .on { position: relative; }
.three .on::after { content: ""; position: absolute; right: -11px; top: 27px; width: 8px; height: 8px; border-radius: 4px; background: #0090e3; }
.event { display: flex; align-items: center; gap: 7px; height: 39px; padding: 0 0 4px 15px; background: #f9f9f9; border-bottom: 2px solid #eee; font-size: 21px; font-weight: bold; }
.case { display: flex; flex-direction: column; gap: 4px; height: 72px; padding: 7px 0 0 21px; border-left: 9px solid #9b30ff; border-bottom: 2px solid #eee; background: #fff; }
.action { display: flex; align-items: center; justify-content: space-between; height: 37px; padding: 0 17px 2px 27px; border-left: 3px solid #9b30ff; border-bottom: 2px solid #0090e3; background: #fff; }
.case b { color: #9b30ff; }
.pill { width: 95px; height: 24px; border: 1px solid #ccc; border-radius: 8px; font-size: 15px; line-height: 20px; color: #8c8c8c; }
.summary { height: 35px; padding: 3px 0 0 19px; border-left: 3px solid #9b30ff; border-bottom: 1px solid #ddd; background: #fff; color: #b3b3b3; }
.editor { display: flex; flex-direction: column; height: 199px; padding: 14px 22px 0 20px; background: #fff; border-left: 3px solid #0090e3; border-bottom: 2px solid #0090e3; }
.editor label { font-size: 15px; line-height: 20px; font-weight: bold; color: #8c8c8c; }
.editor .picker { height: 37px; margin: 0; font-size: 21px; }
.editor .picker select { height: 35px; padding-top: 4px; }
.outline { width: 100px; height: 30px; margin: 28px auto 22px; border: 1px solid #777; }
.done { display: flex; justify-content: space-between; align-items: center; }
.done a { color: #333; font-size: 15px; padding-top: 6px; }
.done button { width: 112px; height: 31px; font-size: 21px; }
.plus { flex: none; height: 25px; display: grid; place-items: center; padding-top: 3px; background: #f9f9f9; box-shadow: 0 2px 4px #bbb; }
.create { flex: none; height: 43px; margin: 50px 22px 0; font-size: 21px; }
.corner { position: absolute; right: 29px; bottom: 22px; }
.right-mark { left: -30px; top: 41px; width: 499px; height: 471px; }
.watermark { position: absolute; right: 0; bottom: 10px; white-space: nowrap; font: 300 51px/64px "Noto Sans CJK SC", sans-serif; color: rgba(232, 232, 232, .8); text-shadow: 1px 1px 1px #999, -1px -1px 1px #f5f5f5; }
```
